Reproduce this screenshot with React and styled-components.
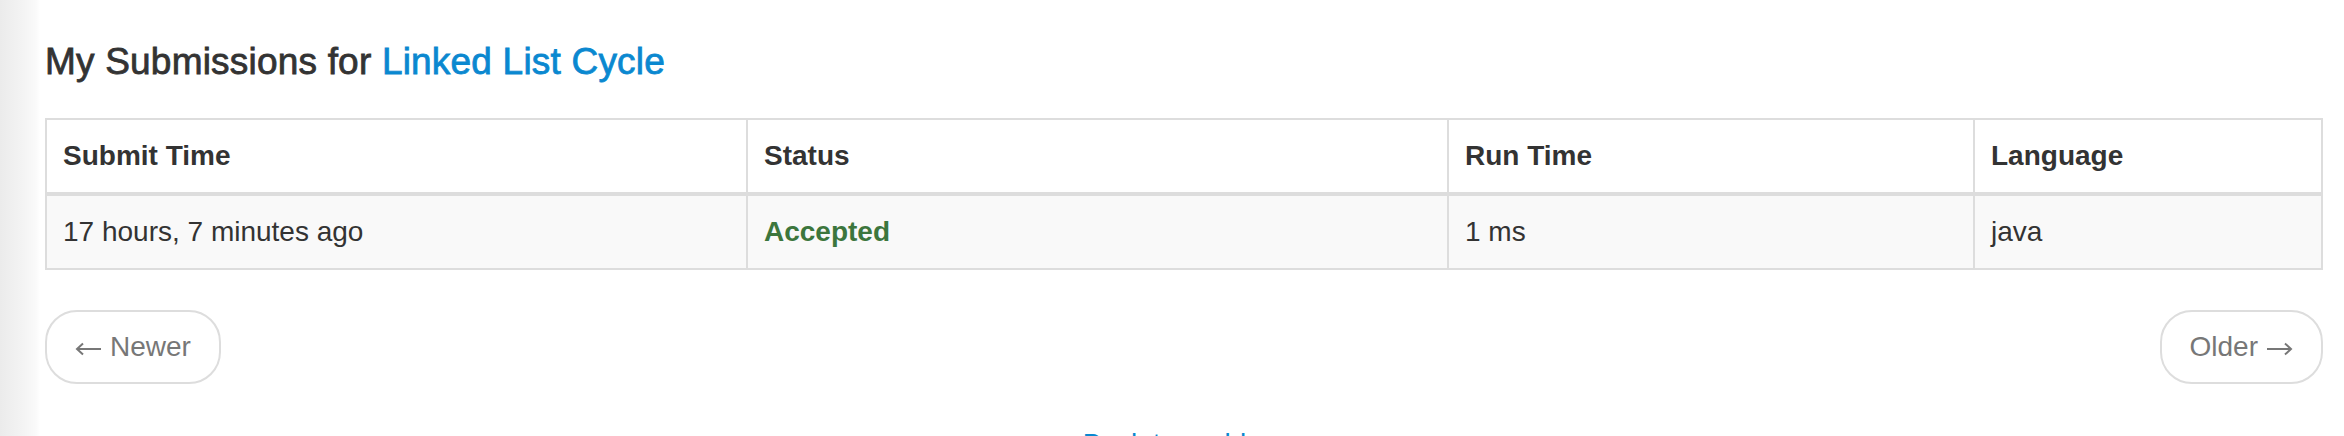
import React from 'react'
import styled, { createGlobalStyle } from 'styled-components'

const GlobalStyle = createGlobalStyle`
  html, body {
    margin: 0;
    padding: 0;
  }
  body {
    font-family: "Liberation Sans", Arial, Helvetica, sans-serif;
    font-size: 28px;
    line-height: 40px;
    color: #333;
    background: linear-gradient(
      to right,
      #ebebeb 0,
      #f4f4f4 24px,
      #fafafa 36px,
      #fff 40px
    );
    overflow: hidden;
  }
`

const Page = styled.div`
  padding: 0 21px 0 45px;
  height: 436px;
  overflow: hidden;
`

// the heading is medium weight in the reference, fake it with a thin stroke
const Title = styled.h4`
  margin: 42px 0 36px;
  font-size: 37px;
  font-weight: normal;
  letter-spacing: 0.2px;
  -webkit-text-stroke: 0.8px currentColor;
  line-height: 40px;
  color: #333;
`

const ProblemLink = styled.a`
  color: #0a88d0;
  text-decoration: none;
`

const Table = styled.table`
  width: 100%;
  border-collapse: collapse;
  border: 2px solid #ddd;
  table-layout: fixed;
`

const HeadCell = styled.th`
  box-sizing: border-box;
  width: ${({ width }) => (width ? `${width}px` : 'auto')};
  padding: 16px;
  text-align: left;
  font-weight: bold;
  border: 2px solid #ddd;
  border-bottom-width: 4px;
  background: #fff;
`

const Row = styled.tr`
  background: ${({ striped }) => (striped ? '#f9f9f9' : '#fff')};
`

const Cell = styled.td`
  padding: 16px;
  border: 2px solid #ddd;
  color: ${({ status }) => (status ? '#3c763d' : '#333')};
  font-weight: ${({ status }) => (status ? 'bold' : 'normal')};
`

const Pager = styled.ul`
  display: flex;
  justify-content: space-between;
  list-style: none;
  margin: 40px 0;
  padding: 0;
`

const PagerButton = styled.a`
  display: inline-flex;
  align-items: center;
  gap: 8px;
  padding: 15px 28px;
  border: 2px solid #ddd;
  border-radius: 32px;
  background: #fff;
  color: #777;
  text-decoration: none;
  line-height: 40px;
`

const Arrow = styled.svg`
  width: 27px;
  height: 14px;
  margin-top: 4px;
  transform: ${({ flip }) => (flip ? 'scaleX(-1)' : 'none')};
`

const BackLink = styled.div`
  text-align: center;

  a {
    color: #0a88d0;
    text-decoration: none;
  }
`

function ArrowIcon({ flip }) {
  return (
    <Arrow viewBox="0 0 27 14" flip={flip}>
      <path
        d="M2 7 H26 M8 1.5 L2 7 L8 12.5"
        fill="none"
        stroke="#777"
        strokeWidth="2"
      />
    </Arrow>
  )
}

const submissions = [
  { time: '17 hours, 7 minutes ago', status: 'Accepted', runtime: '1 ms', lang: 'java' },
]

const columns = [
  { label: 'Submit Time', width: 701 },
  { label: 'Status', width: 701 },
  { label: 'Run Time', width: 526 },
  { label: 'Language' },
]

function App() {
  return (
    <>
      <GlobalStyle />
      <Page>
        <Title>
          My Submissions for <ProblemLink href="#">Linked List Cycle</ProblemLink>
        </Title>
        <Table>
          <thead>
            <tr>
              {columns.map((col) => (
                <HeadCell key={col.label} width={col.width}>
                  {col.label}
                </HeadCell>
              ))}
            </tr>
          </thead>
          <tbody>
            {submissions.map((sub, i) => (
              <Row key={i} striped={i % 2 === 0}>
                <Cell>{sub.time}</Cell>
                <Cell status>{sub.status}</Cell>
                <Cell>{sub.runtime}</Cell>
                <Cell>{sub.lang}</Cell>
              </Row>
            ))}
          </tbody>
        </Table>
        <Pager>
          <li>
            <PagerButton href="#">
              <ArrowIcon />
              Newer
            </PagerButton>
          </li>
          <li>
            <PagerButton href="#">
              Older
              <ArrowIcon flip />
            </PagerButton>
          </li>
        </Pager>
        <BackLink>
          <a href="#">Back to problem</a>
        </BackLink>
      </Page>
    </>
  )
}

export default App
